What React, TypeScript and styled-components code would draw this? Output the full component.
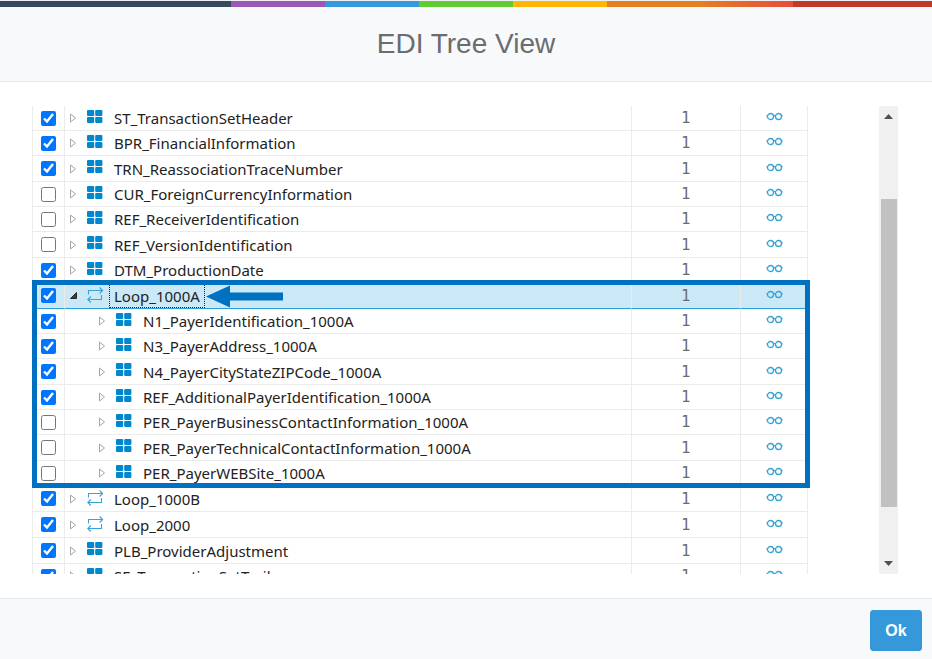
import React, { useState } from "react";
import styled, { createGlobalStyle, css } from "styled-components";

const GlobalStyle = createGlobalStyle`
  * { box-sizing: border-box; }
  body { margin: 0; background: #fff; font-family: "Noto Sans", "Open Sans", sans-serif; }
`;

const Dialog = styled.div`
  display: flex;
  flex-direction: column;
  height: 100vh;
`;

const Stripe = styled.div`
  height: 7px;
  border-top: 1px solid #eef0f1;
  background: linear-gradient(
    to right,
    #34495e 0 24.8%,
    #9b59b6 24.8% 34.9%,
    #3498db 34.9% 45%,
    #62cb31 45% 55%,
    #ffb606 55% 65.1%,
    #e67e22 65.1% 75.2%,
    #e74c3c 85.1%,
    #c0392b 85.1% 100%
  );
`;

const Header = styled.header`
  display: flex;
  align-items: center;
  justify-content: center;
  height: 75px;
  background: #f7f9fb;
  border-bottom: 1px solid #e5e7e8;
`;

const Title = styled.h1`
  margin: 0;
  font: 400 28px/36px "Liberation Sans", Arial, sans-serif;
  color: #6a6c6f;
`;

const Body = styled.main`
  flex: 1;
  min-height: 0;
  display: flex;
  gap: 69px;
  padding: 24px 34px 24px 32px;
`;

const Viewport = styled.div`
  flex: 1;
  min-width: 0;
  overflow-y: auto;
  scrollbar-width: none;
`;

const Canvas = styled.div`
  position: relative;
  padding-right: 2px;
`;

const Tree = styled.table`
  width: 100%;
  table-layout: fixed;
  border-collapse: separate;
  border-spacing: 0;
  border-left: 1px solid #ebebeb;
`;

const Row = styled.tr<{ $tall?: boolean; $selected?: boolean }>`
  height: ${(p) => (p.$tall ? 26 : 25)}px;
  ${(p) =>
    p.$selected &&
    css`
      background: #cbe8f6;
      td { border-bottom-color: #26a0da; }
    `}
`;

const Cell = styled.td`
  padding: 0;
  border-right: 1px solid #ebebeb;
  border-bottom: 1px solid #ebebeb;
  line-height: 0;
  text-align: center;
  vertical-align: middle;
`;

const Check = styled.input`
  display: block;
  width: 15px;
  height: 15px;
  margin: 0 8px;
`;

const NameLine = styled.div<{ $child?: boolean }>`
  display: flex;
  align-items: center;
  height: 24px;
  padding-left: ${(p) => (p.$child ? 32 : 3)}px;
`;

const Toggle = styled.button`
  display: flex;
  padding: 0;
  border: 0;
  background: none;
  margin-right: 9px;
`;

const IconSlot = styled.span<{ $loop?: boolean }>`
  display: flex;
  width: 18px;
  margin-right: 4px;
  padding-bottom: ${(p) => (p.$loop ? 1 : 4)}px;
`;

const Label = styled.span<{ $selected?: boolean }>`
  position: relative;
  height: 24px;
  padding: 0 4px;
  border: 1px ${(p) => (p.$selected ? "dotted #222" : "solid transparent")};
  font-size: 15px;
  line-height: 22px;
  color: #222;
  white-space: nowrap;
`;

const Pointer = styled.svg`
  position: absolute;
  left: 100%;
  top: 0;
  margin-left: 2px;
`;

const Count = styled.span`
  display: block;
  font: 15px/24px "DejaVu Sans", Tahoma, sans-serif;
  color: #6a6c6f;
`;

const ViewButton = styled.button`
  padding: 0 0 3px;
  border: 0;
  background: none;
  line-height: 0;
  vertical-align: middle;
`;

const Highlight = styled.div`
  position: absolute;
  top: 174px;
  left: 0;
  right: 0;
  height: 208px;
  border: 5px solid #0070c0;
  pointer-events: none;
`;

const Scrollbar = styled.div`
  display: flex;
  flex-direction: column;
  align-items: center;
  width: 19px;
  padding: 8px 0;
  background: #f0f0f0;
`;

const Track = styled.div`
  flex: 1;
  display: grid;
  grid-template-rows: 80fr 308fr 54fr;
  width: 16px;
`;

const Thumb = styled.div`
  grid-row: 2;
  background: #c1c1c1;
`;

const Footer = styled.footer`
  display: flex;
  align-items: center;
  justify-content: flex-end;
  height: 61px;
  padding: 3px 10px 0;
  background: #f7f9fb;
  border-top: 1px solid #e5e7e8;
`;

const OkButton = styled.button`
  width: 52px;
  height: 41px;
  padding: 0;
  border: 1px solid #3498db;
  border-radius: 3px;
  background: #3498db;
  color: #fff;
  font: 700 16px/24px "Liberation Sans", Arial, sans-serif;
`;

const SegmentIcon = () => (
  <svg width="16" height="13" viewBox="0 0 16 13" fill="#0088ce" aria-hidden="true">
    <rect width="7.2" height="6" rx="1" />
    <rect x="8.2" width="7.2" height="6" rx="1" />
    <rect y="7" width="7.2" height="6" rx="1" />
    <rect x="8.2" y="7" width="7.2" height="6" rx="1" />
  </svg>
);

const LoopIcon = () => (
  <svg width="17" height="16" viewBox="0 0 17 16" fill="none" stroke="#36a3dc" strokeWidth="1.1" aria-hidden="true">
    <path d="M1.5 7.5v-4H15.5M12.6.5l3 3-3 3M14.5 8v4.5H.8M3.8 9.5l-3 3 3 3" />
  </svg>
);

const GlassesIcon = () => (
  <svg width="17" height="9" viewBox="0 0 17 9" fill="none" stroke="#36a3d4" strokeWidth="1.3" aria-hidden="true">
    <circle cx="4.5" cy="4.5" r="3" />
    <circle cx="12.5" cy="4.5" r="3" />
    <path d="M7.4 3.9q1.1-.6 2.2 0M.4 3.8h1.2M15.4 3.8h1.2" />
  </svg>
);

const ToggleIcon = ({ open }: { open?: boolean }) => (
  <svg width="10" height="10" viewBox="0 0 10 10" aria-hidden="true">
    {open ? (
      <path d="M8.5 1.5v6h-6z" fill="#404040" stroke="#262626" strokeLinejoin="round" />
    ) : (
      <path d="M2.5 1v8L7.5 5z" fill="#fff" stroke="#a6a6a6" />
    )}
  </svg>
);

const Caret = ({ down }: { down?: boolean }) => (
  <svg width="9" height="5" viewBox="0 0 9 5" fill="#505050" aria-hidden="true">
    <path d={down ? "M0 0h9L4.5 5z" : "M0 5h9L4.5 0z"} />
  </svg>
);

type Item = { name: string; checked?: boolean; loop?: boolean; child?: boolean; tall?: boolean; selected?: boolean };

const items: Item[] = [
  { name: "ST_TransactionSetHeader", checked: true },
  { name: "BPR_FinancialInformation", checked: true },
  { name: "TRN_ReassociationTraceNumber", checked: true, tall: true },
  { name: "CUR_ForeignCurrencyInformation" },
  { name: "REF_ReceiverIdentification" },
  { name: "REF_VersionIdentification", tall: true },
  { name: "DTM_ProductionDate", checked: true },
  { name: "Loop_1000A", checked: true, loop: true, tall: true, selected: true },
  { name: "N1_PayerIdentification_1000A", checked: true, child: true },
  { name: "N3_PayerAddress_1000A", checked: true, child: true },
  { name: "N4_PayerCityStateZIPCode_1000A", checked: true, child: true, tall: true },
  { name: "REF_AdditionalPayerIdentification_1000A", checked: true, child: true },
  { name: "PER_PayerBusinessContactInformation_1000A", child: true },
  { name: "PER_PayerTechnicalContactInformation_1000A", child: true, tall: true },
  { name: "PER_PayerWEBSite_1000A", child: true },
  { name: "Loop_1000B", checked: true, loop: true, tall: true },
  { name: "Loop_2000", checked: true, loop: true, tall: true },
  { name: "PLB_ProviderAdjustment", checked: true, tall: true },
  { name: "SE_TransactionSetTrailer", checked: true },
];

const TreeRow = ({ item }: { item: Item }) => {
  const [checked, setChecked] = useState(!!item.checked);
  return (
    <Row $tall={item.tall} $selected={item.selected}>
      <Cell>
        <Check
          type="checkbox"
          aria-label={item.name}
          checked={checked}
          onChange={(e) => setChecked(e.target.checked)}
        />
      </Cell>
      <Cell>
        <NameLine $child={item.child}>
          <Toggle type="button" aria-label={item.selected ? "Collapse" : "Expand"}>
            <ToggleIcon open={item.selected} />
          </Toggle>
          <IconSlot $loop={item.loop}>{item.loop ? <LoopIcon /> : <SegmentIcon />}</IconSlot>
          <Label $selected={item.selected}>
            {item.name}
            {item.selected && (
              <Pointer width="77" height="24" viewBox="0 0 77 24" fill="#0070c0" aria-hidden="true">
                <path d="M0 11.5L24 .5v7h53v8H24v7z" />
              </Pointer>
            )}
          </Label>
        </NameLine>
      </Cell>
      <Cell>
        <Count>1</Count>
      </Cell>
      <Cell>
        <ViewButton type="button" aria-label={"View " + item.name}>
          <GlassesIcon />
        </ViewButton>
      </Cell>
    </Row>
  );
};

export default function App() {
  return (
    <>
      <GlobalStyle />
      <Dialog>
        <Stripe />
        <Header>
          <Title>EDI Tree View</Title>
        </Header>
        <Body>
          <Viewport>
            <Canvas>
              <Tree>
                <colgroup>
                  <col width="32" />
                  <col />
                  <col width="109" />
                  <col width="67" />
                </colgroup>
                <tbody>
                  {items.map((item) => (
                    <TreeRow key={item.name} item={item} />
                  ))}
                </tbody>
              </Tree>
              <Highlight />
            </Canvas>
          </Viewport>
          <Scrollbar>
            <Caret />
            <Track>
              <Thumb />
            </Track>
            <Caret down />
          </Scrollbar>
        </Body>
        <Footer>
          <OkButton type="button">Ok</OkButton>
        </Footer>
      </Dialog>
    </>
  );
}
